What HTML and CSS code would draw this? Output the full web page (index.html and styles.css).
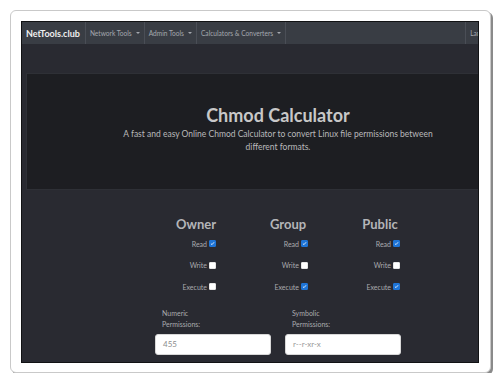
FILE: index.html
```html
<!DOCTYPE html>
<html>
<head>
<meta charset="utf-8">
<link rel="stylesheet" href="styles.css">
</head>
<body>
<div class="card">
  <div class="shot">
    <div class="page">
      <nav class="navbar">
        <div class="brand">NetTools.club</div>
        <div class="nav-item">Network Tools <span class="caret"></span></div>
        <div class="nav-item">Admin Tools <span class="caret"></span></div>
        <div class="nav-item">Calculators &amp; Converters <span class="caret"></span></div>
        <div class="nav-spacer"></div>
        <div class="nav-item nav-right">Language</div>
      </nav>
      <div class="content">
        <section class="jumbo">
          <h1 class="title">Chmod Calculator</h1>
          <p class="lead">A fast and easy Online Chmod Calculator to convert Linux file permissions between different formats.</p>
        </section>
        <div class="perms">
          <div class="col">
            <h2 class="col-head">Owner</h2>
            <div class="row">Read <span class="cb on"></span></div>
            <div class="row">Write <span class="cb"></span></div>
            <div class="row">Execute <span class="cb"></span></div>
          </div>
          <div class="col">
            <h2 class="col-head">Group</h2>
            <div class="row">Read <span class="cb on"></span></div>
            <div class="row">Write <span class="cb"></span></div>
            <div class="row">Execute <span class="cb on"></span></div>
          </div>
          <div class="col">
            <h2 class="col-head">Public</h2>
            <div class="row">Read <span class="cb on"></span></div>
            <div class="row">Write <span class="cb"></span></div>
            <div class="row">Execute <span class="cb on"></span></div>
          </div>
        </div>
        <div class="fields">
          <div class="field">
            <label class="field-label">Numeric<br>Permissions:</label>
            <div class="input">455</div>
          </div>
          <div class="field">
            <label class="field-label">Symbolic<br>Permissions:</label>
            <div class="input placeholder">r--r-xr-x</div>
          </div>
        </div>
      </div>
    </div>
  </div>
</div>
</body>
</html>
```

FILE: styles.css
```css
* { box-sizing: border-box; }
html, body { margin: 0; padding: 0; background: #ffffff; }
body { padding: 10px 0 0 10px; font-family: "Lato", "Open Sans", sans-serif; }

.card {
  width: 481px;
  height: 363px;
  border: 1px solid #c9c9c9;
  border-radius: 6px;
  background: #ffffff;
  box-shadow: 2px 2px 0 #8a8a8a;
  padding: 10px 11px 9px 10px;
}

.shot {
  width: 458px;
  height: 342px;
  border: 1px solid #111214;
  overflow: hidden;
  background: #292b32;
}

.page { width: 512px; }

.navbar {
  height: 22px;
  background: #393d44;
  display: flex;
  align-items: stretch;
  padding-left: 4px;
  overflow: hidden;
}
.brand {
  color: #f0f0f0;
  font-weight: 700;
  font-size: 9px;
  display: flex;
  align-items: center;
  padding-right: 5px;
  border-right: 1px solid #4a4e56;
}
.nav-item {
  color: #a4a8ae;
  font-size: 6.6px;
  display: flex;
  align-items: center;
  gap: 3px;
  padding: 0 4px;
  border-right: 1px solid #4a4e56;
  white-space: nowrap;
}
.caret {
  width: 0; height: 0;
  border-left: 2px solid transparent;
  border-right: 2px solid transparent;
  border-top: 2px solid #a4a8ae;
  margin-left: 1px;
}
.nav-spacer { width: 180px; border-right: 1px solid #4a4e56; }
.nav-right { border-right: none; }

.content { background: #292a31; padding: 29px 4px 20px 4px; }

.jumbo {
  background: #1d1e22;
  height: 117px;
  margin: 0;
  text-align: center;
  padding-top: 29px;
  color: #c4c4c4;
  border: 1px solid #2e3036;
}
.title {
  margin: 0;
  font-family: "Lato", sans-serif;
  font-weight: 700;
  font-size: 18px;
  line-height: 24px;
  color: #c8c8c8;
}
.lead {
  margin: 1px auto 0;
  width: 320px;
  font-size: 8.5px;
  line-height: 13px;
  color: #b9b9bb;
}

.perms {
  display: grid;
  grid-template-columns: repeat(3, 92px);
  margin: 25px 0 0 124px;
}
.col-head {
  margin: 0;
  text-align: center;
  font-family: "Lato", sans-serif;
  font-weight: 700;
  font-size: 13px;
  line-height: 18px;
  color: #b4b5b8;
}
.row {
  display: flex;
  justify-content: flex-end;
  align-items: center;
  gap: 2px;
  height: 21.5px;
  padding-right: 26px;
  font-size: 7px;
  color: #a9aaae;
}
.cb {
  width: 7px;
  height: 7px;
  border-radius: 1px;
  background: #ffffff;
  border: 1px solid #e6e6e6;
}
.cb.on {
  background: #1e74d6 url("data:image/svg+xml,%3Csvg xmlns='http://www.w3.org/2000/svg' viewBox='0 0 8 8'%3E%3Cpath d='M1.5 4.2 L3.2 5.8 L6.5 2' fill='none' stroke='white' stroke-width='1.3'/%3E%3C/svg%3E") center/100% no-repeat;
  border-color: #1e74d6;
}

.fields {
  display: flex;
  gap: 14px;
  margin: 10px 0 0 129px;
}
.field { width: 116px; }
.field-label {
  display: block;
  padding-left: 7px;
  font-size: 7px;
  line-height: 11px;
  color: #a9aaae;
  margin-bottom: 4px;
}
.input {
  height: 21px;
  background: #ffffff;
  border-radius: 3px;
  border: 1px solid #d8d8d8;
  padding-left: 7px;
  display: flex;
  align-items: center;
  font-size: 8px;
  color: #8c8c8c;
}
.input.placeholder { color: #9a9a9a; }
```
